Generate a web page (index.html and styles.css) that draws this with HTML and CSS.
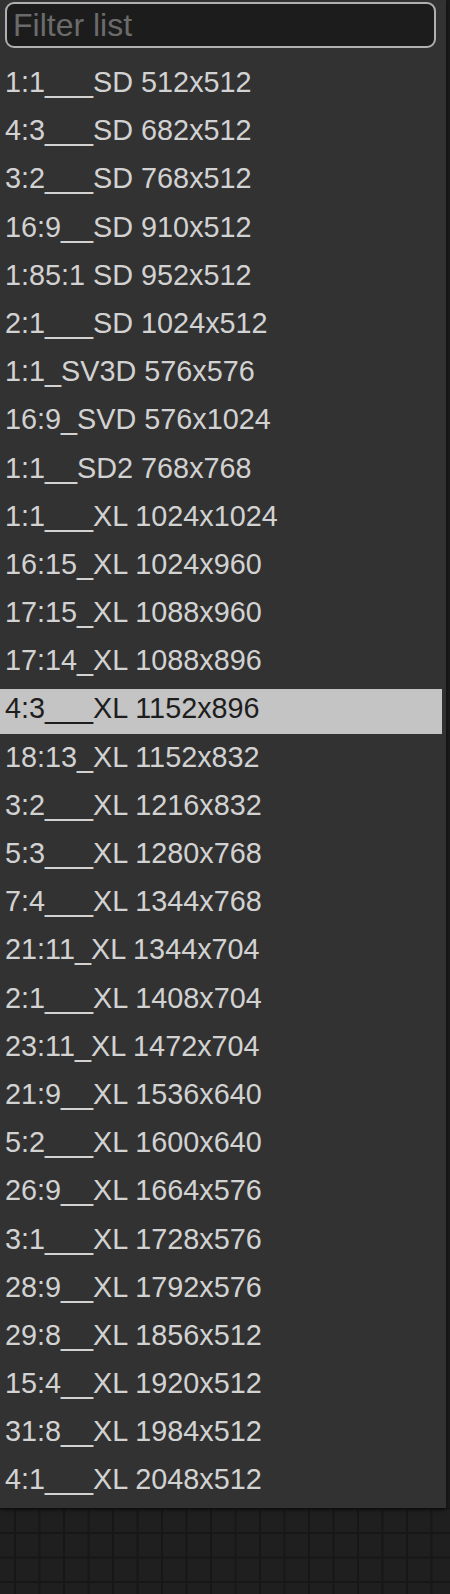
FILE: index.html
```html
<!DOCTYPE html>
<html>
<head>
<meta charset="utf-8">
<link rel="stylesheet" href="styles.css">
</head>
<body>
<div class="canvas">
  <div class="menu">
    <input class="filter" type="text" placeholder="Filter list">
    <div class="entries">
      <div class="entry">1:1___SD 512x512</div>
      <div class="entry">4:3___SD 682x512</div>
      <div class="entry">3:2___SD 768x512</div>
      <div class="entry">16:9__SD 910x512</div>
      <div class="entry">1:85:1 SD 952x512</div>
      <div class="entry">2:1___SD 1024x512</div>
      <div class="entry">1:1_SV3D 576x576</div>
      <div class="entry">16:9_SVD 576x1024</div>
      <div class="entry">1:1__SD2 768x768</div>
      <div class="entry">1:1___XL 1024x1024</div>
      <div class="entry">16:15_XL 1024x960</div>
      <div class="entry">17:15_XL 1088x960</div>
      <div class="entry">17:14_XL 1088x896</div>
      <div class="entry selected">4:3___XL 1152x896</div>
      <div class="entry">18:13_XL 1152x832</div>
      <div class="entry">3:2___XL 1216x832</div>
      <div class="entry">5:3___XL 1280x768</div>
      <div class="entry">7:4___XL 1344x768</div>
      <div class="entry">21:11_XL 1344x704</div>
      <div class="entry">2:1___XL 1408x704</div>
      <div class="entry">23:11_XL 1472x704</div>
      <div class="entry">21:9__XL 1536x640</div>
      <div class="entry">5:2___XL 1600x640</div>
      <div class="entry">26:9__XL 1664x576</div>
      <div class="entry">3:1___XL 1728x576</div>
      <div class="entry">28:9__XL 1792x576</div>
      <div class="entry">29:8__XL 1856x512</div>
      <div class="entry">15:4__XL 1920x512</div>
      <div class="entry">31:8__XL 1984x512</div>
      <div class="entry">4:1___XL 2048x512</div>
    </div>
  </div>
</div>
</body>
</html>
```

FILE: styles.css
```css
html, body {
  margin: 0;
  padding: 0;
}

body {
  width: 450px;
  height: 1594px;
  overflow: hidden;
  background-color: #1f1f1f;
  background-image:
    linear-gradient(to right, #171717 0, #171717 2px, transparent 2px),
    linear-gradient(to bottom, #171717 0, #171717 2px, transparent 2px);
  background-size: 24.5px 24.5px;
  background-position: 14px 13px;
  font-family: "Liberation Sans", Arial, sans-serif;
}

.canvas {
  display: flex;
  background: linear-gradient(to right, transparent 446px, #1a1a1a 446px);
}

.menu {
  width: 446px;
  background: #323232;
  box-shadow: 0 2px 4px rgba(0, 0, 0, 0.5);
  padding: 2px 0 1px 0;
  display: flex;
  flex-direction: column;
}

.filter {
  box-sizing: border-box;
  width: 431px;
  height: 46px;
  margin: 0 0 13px 5px;
  padding: 0 0 0 6px;
  border: 2px solid #b0b0b0;
  border-radius: 9px;
  background: #1c1c1c;
  color: #cfcfcf;
  font-family: "Liberation Sans", Arial, sans-serif;
  font-size: 32px;
  line-height: 42px;
  outline: none;
}

.filter::placeholder {
  color: #6b6b6b;
}

.entries {
  display: flex;
  flex-direction: column;
}

.entry {
  box-sizing: border-box;
  height: 44.2px;
  margin: 2px 4px 2px 0;
  padding: 0 0 6px 5px;
  font-size: 28.8px;
  line-height: 38px;
  color: #d2d2d2;
  white-space: nowrap;
}

.entry.selected {
  background: #c4c4c4;
  color: #1e1e1e;
}
```
